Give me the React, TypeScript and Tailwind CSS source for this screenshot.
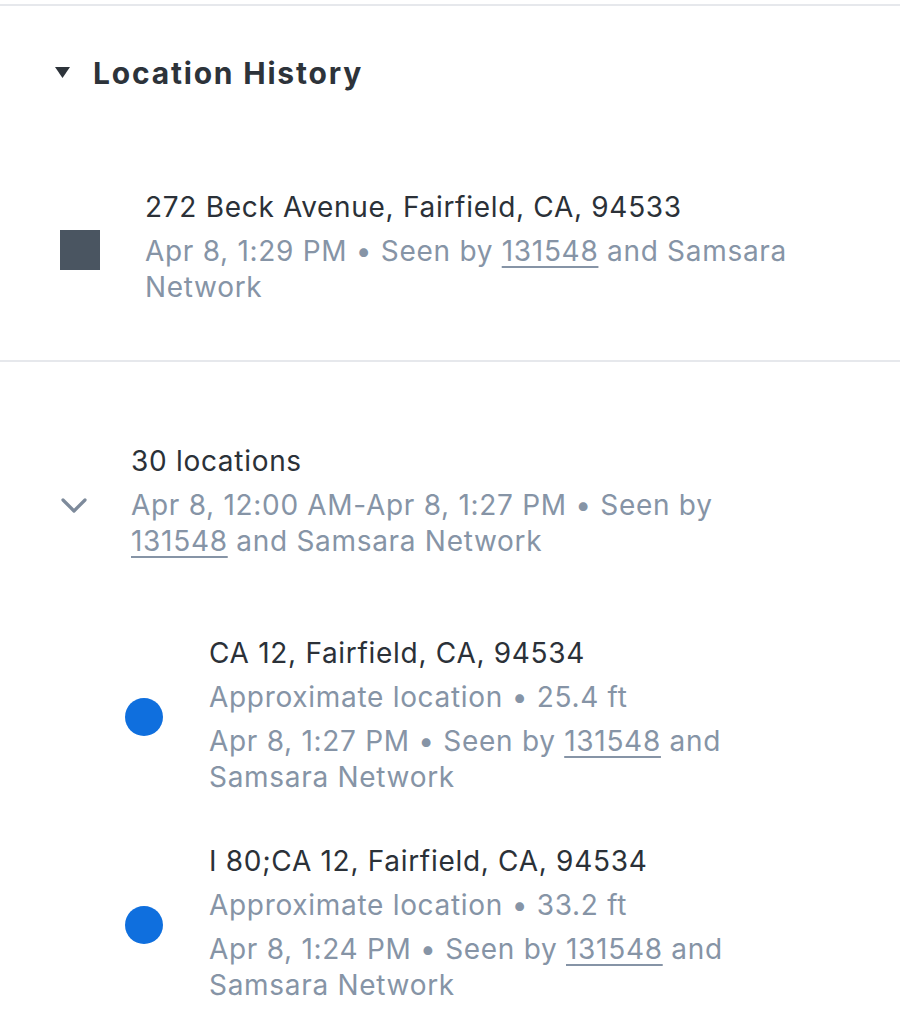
const font = { fontFamily: "Inter, 'Noto Sans', sans-serif" };

function Seen({ time }: { time: string }) {
  return (
    <>
      {time} • Seen by{" "}
      <span className="underline decoration-2 underline-offset-[5px]">131548</span> and Samsara Network
    </>
  );
}

function NestedItem({ title, dist, time }: { title: string; dist: string; time: string }) {
  return (
    <div className="flex items-center">
      <div className="w-[209px] flex justify-start pl-[125px] shrink-0 pt-[4px]">
        <div className="w-[38px] h-[38px] rounded-full bg-[#0f6fde]" />
      </div>
      <div className="w-[605px] text-[28px] leading-[36px] tracking-[0.7px]">
        <div className="text-[#2b3138]">{title}</div>
        <div className="mt-2 text-[#8694a6]">Approximate location • {dist}</div>
        <div className="mt-2 text-[#8694a6]">
          <Seen time={time} />
        </div>
      </div>
    </div>
  );
}

export default function App() {
  return (
    <div className="w-[900px] min-h-[1034px] bg-white pt-1" style={font}>
      <div className="border-t-2 border-[#e6e8ec]">
        <div className="flex items-center pt-[47px]">
          <svg width="16" height="12" viewBox="0 0 16 12" className="ml-[55px] mr-[22px]">
            <path d="M0 0 H15 L7.5 11 Z" fill="#2d333a" />
          </svg>
          <h2 className="text-[30px] leading-[40px] font-bold tracking-[1.8px] text-[#2d333a]">Location History</h2>
        </div>

        <div className="flex items-center mt-[96px] pb-[55px]">
          <div className="w-[145px] shrink-0 pl-[60px] pt-[6px]">
            <div className="w-[40px] h-[40px] bg-[#4a5561]" />
          </div>
          <div className="w-[665px] text-[28px] leading-[36px] tracking-[0.7px]">
            <div className="text-[#2b3138]">272 Beck Avenue, Fairfield, CA, 94533</div>
            <div className="mt-2 text-[#8694a6]">
              <Seen time="Apr 8, 1:29 PM" />
            </div>
          </div>
        </div>
      </div>

      <div className="border-t-2 border-[#e6e8ec] pt-[81px]">
        <div className="flex items-center">
          <div className="w-[131px] shrink-0 pl-[60px] pt-[10px]">
            <svg width="28" height="18" viewBox="0 0 28 18">
              <path d="M3 3 L14 14 L25 3" fill="none" stroke="#7d8a9b" strokeWidth="3.2" strokeLinecap="round" strokeLinejoin="round" />
            </svg>
          </div>
          <div className="w-[680px] text-[28px] leading-[36px] tracking-[0.7px]">
            <div className="text-[#2b3138]">30 locations</div>
            <div className="mt-2 text-[#8694a6]">
              Apr 8, 12:00 AM-Apr 8, 1:27 PM • Seen by{" "}
              <span className="underline decoration-2 underline-offset-[5px]">131548</span> and Samsara Network
            </div>
          </div>
        </div>

        <div className="mt-[76px] flex flex-col gap-12">
          <NestedItem title="CA 12, Fairfield, CA, 94534" dist="25.4 ft" time="Apr 8, 1:27 PM" />
          <NestedItem title="I 80;CA 12, Fairfield, CA, 94534" dist="33.2 ft" time="Apr 8, 1:24 PM" />
        </div>
      </div>
    </div>
  );
}
